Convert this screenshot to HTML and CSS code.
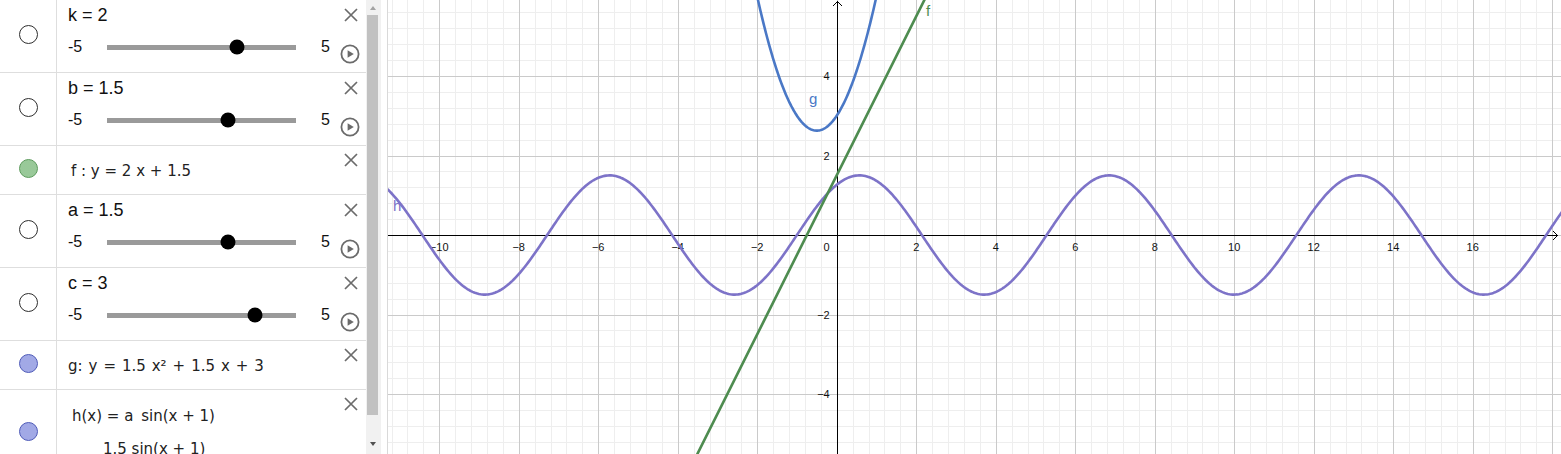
FILE: index.html
```html
<!DOCTYPE html>
<html lang="en">
<head>
<meta charset="utf-8">
<title>Graphing</title>
<link rel="stylesheet" href="styles.css">
</head>
<body>
<div class="app">
  <div class="algebra">
    <div class="row slider-row">
      <div class="marble-cell"><span class="marble"></span></div>
      <div class="content">
        <div class="name">k = 2</div>
        <div class="slider-line">
          <span class="min">-5</span>
          <span class="track"><span class="knob" style="left:129.7px"></span></span>
          <span class="max">5</span>
        </div>
      </div>
      <div class="controls">
        <svg class="close" viewBox="0 0 14 14"><path d="M1 1L13 13M13 1L1 13"/></svg>
        <svg class="play" viewBox="0 0 20 20"><circle cx="10" cy="10" r="8.6"/><path d="M7.6 6.2V13.8L13.8 10Z"/></svg>
      </div>
    </div>
    <div class="row slider-row">
      <div class="marble-cell"><span class="marble"></span></div>
      <div class="content">
        <div class="name">b = 1.5</div>
        <div class="slider-line">
          <span class="min">-5</span>
          <span class="track"><span class="knob" style="left:120.7px"></span></span>
          <span class="max">5</span>
        </div>
      </div>
      <div class="controls">
        <svg class="close" viewBox="0 0 14 14"><path d="M1 1L13 13M13 1L1 13"/></svg>
        <svg class="play" viewBox="0 0 20 20"><circle cx="10" cy="10" r="8.6"/><path d="M7.6 6.2V13.8L13.8 10Z"/></svg>
      </div>
    </div>
    <div class="row func-row">
      <div class="marble-cell"><span class="marble marble-green"></span></div>
      <div class="content math math-f">f : y = 2 x + 1.5</div>
      <div class="controls">
        <svg class="close close-func" viewBox="0 0 14 14"><path d="M1 1L13 13M13 1L1 13"/></svg>
      </div>
    </div>
    <div class="row slider-row">
      <div class="marble-cell"><span class="marble"></span></div>
      <div class="content">
        <div class="name">a = 1.5</div>
        <div class="slider-line">
          <span class="min">-5</span>
          <span class="track"><span class="knob" style="left:120.7px"></span></span>
          <span class="max">5</span>
        </div>
      </div>
      <div class="controls">
        <svg class="close" viewBox="0 0 14 14"><path d="M1 1L13 13M13 1L1 13"/></svg>
        <svg class="play" viewBox="0 0 20 20"><circle cx="10" cy="10" r="8.6"/><path d="M7.6 6.2V13.8L13.8 10Z"/></svg>
      </div>
    </div>
    <div class="row slider-row">
      <div class="marble-cell"><span class="marble"></span></div>
      <div class="content">
        <div class="name">c = 3</div>
        <div class="slider-line">
          <span class="min">-5</span>
          <span class="track"><span class="knob" style="left:147.7px"></span></span>
          <span class="max">5</span>
        </div>
      </div>
      <div class="controls">
        <svg class="close" viewBox="0 0 14 14"><path d="M1 1L13 13M13 1L1 13"/></svg>
        <svg class="play" viewBox="0 0 20 20"><circle cx="10" cy="10" r="8.6"/><path d="M7.6 6.2V13.8L13.8 10Z"/></svg>
      </div>
    </div>
    <div class="row func-row">
      <div class="marble-cell"><span class="marble marble-blue"></span></div>
      <div class="content math math-g">g: y = 1.5 x² + 1.5 x + 3</div>
      <div class="controls">
        <svg class="close close-func" viewBox="0 0 14 14"><path d="M1 1L13 13M13 1L1 13"/></svg>
      </div>
    </div>
    <div class="row multi-row">
      <div class="marble-cell"><span class="marble marble-blue"></span></div>
      <div class="content math math-h"><div class="line">h(x) = a&#8201; sin(x + 1)</div><div class="line value">1.5 sin(x + 1)</div></div>
      <div class="controls">
        <svg class="close close-func" viewBox="0 0 14 14"><path d="M1 1L13 13M13 1L1 13"/></svg>
      </div>
    </div>
  </div>
  <div class="scrollbar">
    <div class="sb-up"><span class="tri-up"></span></div>
    <div class="thumb"></div>
    <div class="sb-down"><span class="tri-down"></span></div>
  </div>
  <div class="splitter"></div>
  <div class="graph">
    <svg id="plot" class="plot" width="1173" height="454" viewBox="0 0 1173 454"></svg>
  </div>
</div>
<script src="script.js"></script>
</body>
</html>
```

FILE: styles.css
```css
* { box-sizing: border-box; }
html, body { margin: 0; padding: 0; }
body {
  font-family: "Liberation Sans", Arial, sans-serif;
  background: #fff;
  overflow: hidden;
  width: 1561px;
  height: 454px;
}
.app { display: flex; width: 1561px; height: 454px; }

.algebra { width: 366px; height: 454px; overflow: hidden; flex: none; }
.row { display: flex; border-bottom: 1px solid #dedede; }
.slider-row { height: 73px; }
.func-row { height: 49px; }
.multi-row { height: 87px; }

.marble-cell {
  width: 57px; flex: none;
  border-right: 1px solid #dedede;
  display: flex; align-items: center; justify-content: center;
  padding-bottom: 3px;
}
.marble {
  width: 19px; height: 19px; border-radius: 50%;
  border: 1px solid #2e2e2e; background: #fff;
}
.marble-green {
  border-color: #5d9b5d;
  background: radial-gradient(circle, rgba(40,110,40,0.3) 0.5px, transparent 0.9px) 0 0 / 2px 2px, #acd8ac;
}
.marble-blue {
  border-color: #4f5bb8;
  background: radial-gradient(circle, rgba(60,70,170,0.3) 0.5px, transparent 0.9px) 0 0 / 2px 2px, #b3baf0;
}

.content { flex: 1; min-width: 0; padding-left: 11px; color: #111; }
.name { height: 31px; line-height: 30px; font-size: 18px; }
.slider-line { display: flex; align-items: center; height: 32px; font-size: 16px; }
.min { width: 39px; flex: none; }
.track { position: relative; width: 189px; height: 5px; background: #9a9a9a; flex: none; }
.knob {
  position: absolute; top: 50%;
  width: 15px; height: 15px; border-radius: 50%;
  background: #000; transform: translate(-50%, -50%);
}
.max { padding-left: 25px; }

.math {
  font-family: "DejaVu Sans", sans-serif; font-size: 15px; color: #222;
  padding-top: 10px; line-height: 30px; white-space: nowrap;
}
.math-f { padding-left: 14px; }
.math-g { padding-left: 11px; word-spacing: 1.2px; }
.math-h { padding-left: 15px; padding-top: 10px; line-height: 33px; }
.line { height: 33px; }
.value { padding-left: 31px; }

.controls { width: 30px; flex: none; display: flex; flex-direction: column; align-items: center; }
.close { width: 14px; height: 14px; margin-top: 8px; fill: none; stroke: #6b6b6b; stroke-width: 1.7; }
.close-func { margin-top: 7px; }
.play { width: 20px; height: 20px; margin-top: 22px; margin-right: 3px; }
.play circle { fill: none; stroke: #6b6b6b; stroke-width: 1.8; }
.play path { fill: #6b6b6b; }

.scrollbar { width: 15px; flex: none; background: #f1f1f1; display: flex; flex-direction: column; }
.sb-up { height: 15px; display: flex; align-items: center; justify-content: center; padding-right: 2px; }
.tri-up { width: 0; height: 0; border-left: 3.5px solid transparent; border-right: 3.5px solid transparent; border-bottom: 4px solid #a3a3a3; }
.thumb { height: 400px; width: 11px; margin-left: 1px; background: #c1c1c1; }
.sb-down { flex: 1; display: flex; align-items: flex-end; justify-content: center; padding-bottom: 8px; padding-right: 2px; }
.tri-down { width: 0; height: 0; border-left: 3.5px solid transparent; border-right: 3.5px solid transparent; border-top: 4px solid #505050; }

.splitter { width: 6px; flex: none; background: #fff; }
.graph { flex: 1; border-left: 1px solid #d9d9d9; overflow: hidden; }
.plot { display: block; }
.tick { font-family: "Liberation Sans", Arial, sans-serif; font-size: 11px; fill: #111; }
.curve-label { font-family: "Liberation Sans", Arial, sans-serif; font-size: 15px; }
```

FILE: script.js
```js
(function () {
  var NS = 'http://www.w3.org/2000/svg';
  var svg = document.getElementById('plot');
  var W = 1173, H = 454, ox = 448.7, oy = 235, u = 39.75;
  function X(x) { return ox + x * u; }
  function Y(y) { return oy - y * u; }
  function el(tag, attrs, text) {
    var e = document.createElementNS(NS, tag);
    for (var k in attrs) e.setAttribute(k, attrs[k]);
    if (text !== undefined) e.textContent = text;
    svg.appendChild(e);
    return e;
  }
  var step = u * 0.4, minor = '', major = '', i, p;
  for (i = Math.ceil(-ox / step); ox + i * step <= W; i++) {
    p = Math.round(ox + i * step) + 0.5;
    if (i % 5 === 0) major += 'M' + p + ' 0V' + H; else minor += 'M' + p + ' 0V' + H;
  }
  for (i = Math.ceil(-oy / step); oy + i * step <= H; i++) {
    p = Math.round(oy + i * step) + 0.5;
    if (i % 5 === 0) major += 'M0 ' + p + 'H' + W; else minor += 'M0 ' + p + 'H' + W;
  }
  el('path', { d: minor, stroke: '#eeeeee', 'stroke-width': 1, fill: 'none' });
  el('path', { d: major, stroke: '#cacaca', 'stroke-width': 1, fill: 'none' });

  var ax = Math.round(ox) + 0.5, ay = Math.round(oy) + 0.5;
  el('path', { d: 'M0 ' + ay + 'H' + (W - 3) + 'M' + ax + ' ' + H + 'V1', stroke: '#000', 'stroke-width': 1, fill: 'none' });
  el('path', { d: 'M' + (ax - 4.5) + ' 6L' + ax + ' 1.5L' + (ax + 4.5) + ' 6', stroke: '#000', 'stroke-width': 1, fill: 'none' });
  el('path', { d: 'M' + (W - 8) + ' ' + (ay - 4.5) + 'L' + (W - 3.5) + ' ' + ay + 'L' + (W - 8) + ' ' + (ay + 4.5), stroke: '#000', 'stroke-width': 1, fill: 'none' });

  var n;
  for (n = -10; n <= 16; n += 2) {
    if (n === 0) continue;
    el('text', { x: X(n), y: oy + 16, 'text-anchor': 'middle', 'class': 'tick' }, (n < 0 ? '\u2212' + (-n) : '' + n));
  }
  el('text', { x: ox - 7, y: oy + 16, 'text-anchor': 'end', 'class': 'tick' }, '0');
  [4, 2, -2, -4].forEach(function (v) {
    el('text', { x: ox - 7, y: Y(v) + 4, 'text-anchor': 'end', 'class': 'tick' }, (v < 0 ? '\u2212' + (-v) : '' + v));
  });

  function path(fn, x0, x1, dx) {
    var d = '', x;
    for (x = x0; x <= x1 + 1e-9; x += dx) {
      d += (d ? 'L' : 'M') + X(x).toFixed(2) + ' ' + Y(fn(x)).toFixed(2);
    }
    return d;
  }
  var a = 1.5, b = 1.5, c = 3, k = 2;
  el('path', { d: path(function (x) { return a * Math.sin(x + 1); }, -11.4, 18.3, 0.04), stroke: '#7d73c8', 'stroke-width': 2.6, fill: 'none', 'stroke-linejoin': 'round' });
  el('path', { d: path(function (x) { return a * x * x + b * x + c; }, -2.6, 1.6, 0.02), stroke: '#4a78c6', 'stroke-width': 2.6, fill: 'none', 'stroke-linejoin': 'round' });
  el('path', { d: path(function (x) { return k * x + b; }, -4, 3, 0.5), stroke: '#4e8c50', 'stroke-width': 2.6, fill: 'none' });

  el('text', { x: 538, y: 16, 'class': 'curve-label', fill: '#4e8c50' }, 'f');
  el('text', { x: 421, y: 104, 'class': 'curve-label', fill: '#4a78c6' }, 'g');
  el('text', { x: 5, y: 211, 'class': 'curve-label', fill: '#7d73c8' }, 'h');
})();
```
